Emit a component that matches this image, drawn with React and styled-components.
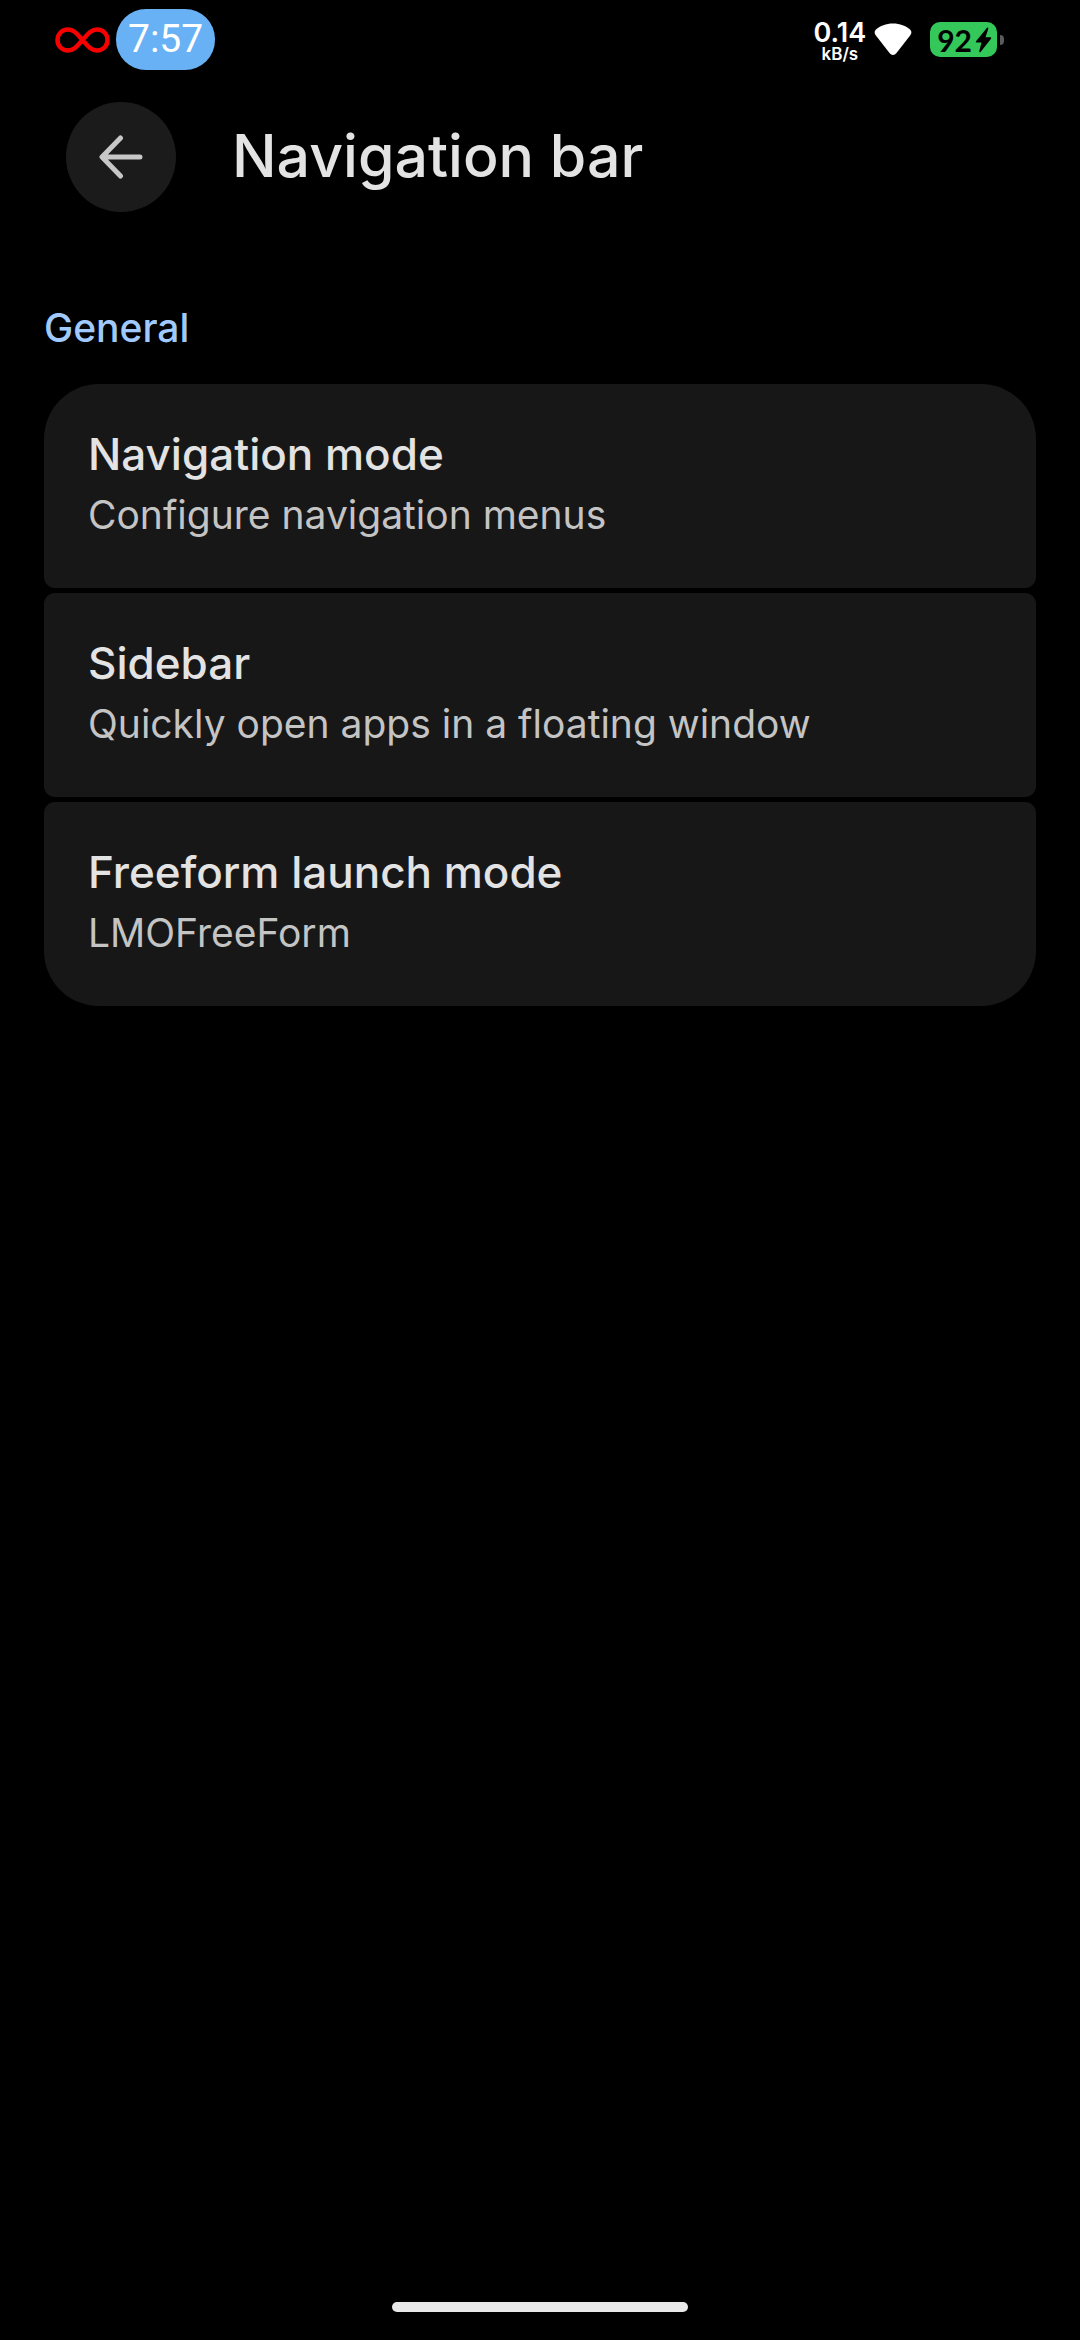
import React from "react";
import styled, { createGlobalStyle } from "styled-components";

const GlobalStyle = createGlobalStyle`
  * {
    box-sizing: border-box;
  }

  body {
    margin: 0;
    background: #000;
    color: #e3e3e3;
    font-family: Inter, Roboto, sans-serif;
  }

  h1, h2, p, ul {
    margin: 0;
    padding: 0;
  }
`;

const preferences = [
  { title: "Navigation mode", summary: "Configure navigation menus" },
  { title: "Sidebar", summary: "Quickly open apps in a floating window" },
  { title: "Freeform launch mode", summary: "LMOFreeForm" },
];

const Screen = styled.div`
  display: flex;
  flex-direction: column;
  min-height: 100vh;
`;

const StatusBar = styled.div`
  display: flex;
  align-items: center;
  justify-content: space-between;
  height: 79px;
  padding: 0 76px 0 54px;
`;

const StatusGroup = styled.div`
  display: flex;
  align-items: center;
  gap: ${(props) => props.$gap}px;
`;

const Clock = styled.time`
  padding: 0 12px;
  border-radius: 30px;
  background: #69b1f5;
  color: #fff;
  font-family: Roboto, sans-serif;
  font-size: 39px;
  line-height: 61px;
`;

const NetworkSpeed = styled.div`
  display: flex;
  flex-direction: column;
  align-items: center;
  padding-top: 4px;
  color: #fff;
  font-weight: 600;
`;

const SpeedValue = styled.span`
  font-size: 27px;
  line-height: 24px;
`;

const SpeedUnit = styled.span`
  font-size: 17px;
  line-height: 18px;
`;

const Battery = styled.div`
  display: flex;
  align-items: center;
  gap: 3px;
`;

const BatteryLevel = styled.div`
  display: flex;
  align-items: center;
  gap: 3px;
  height: 35px;
  padding: 0 5px 0 7px;
  border-radius: 10px;
  background: #34c759;
  color: #000;
  font-family: Lato, sans-serif;
  font-size: 30px;
  font-weight: 700;
`;

const BatteryTip = styled.span`
  width: 4px;
  height: 10px;
  border-radius: 0 5px 5px 0;
  background: #5a5a5a;
`;

const Toolbar = styled.header`
  display: flex;
  align-items: center;
  gap: 56px;
  padding: 23px 66px 0;
`;

const BackButton = styled.button`
  display: flex;
  align-items: center;
  justify-content: center;
  width: 110px;
  height: 110px;
  padding: 0;
  border: 0;
  border-radius: 50%;
  background: #1b1b1b;
  color: #c7c7c7;
  cursor: pointer;
`;

const PageTitle = styled.h1`
  padding-bottom: 2px;
  font-size: 59px;
  font-weight: 500;
  line-height: 76px;
`;

const Content = styled.main`
  flex: 1;
  padding: 92px 44px 0;
`;

const SectionTitle = styled.h2`
  color: #a0cafd;
  font-size: 39px;
  font-weight: 500;
  line-height: 48px;
`;

const PreferenceList = styled.ul`
  display: flex;
  flex-direction: column;
  gap: 5px;
  margin-top: 32px;
  list-style: none;
`;

const Preference = styled.button`
  display: flex;
  flex-direction: column;
  gap: 9px;
  width: 100%;
  padding: 42px 44px 49px;
  border: 0;
  border-radius: 11px;
  background: #171717;
  color: inherit;
  font-family: inherit;
  text-align: left;
  cursor: pointer;

  li:first-child > & {
    border-top-left-radius: 55px;
    border-top-right-radius: 55px;
  }

  li:last-child > & {
    border-bottom-left-radius: 55px;
    border-bottom-right-radius: 55px;
  }
`;

const PreferenceTitle = styled.span`
  font-size: 44px;
  font-weight: 500;
  line-height: 56px;
`;

const PreferenceSummary = styled.span`
  color: #c4c4c4;
  font-size: 39px;
  line-height: 48px;
`;

const GestureBar = styled.footer`
  display: flex;
  justify-content: center;
  padding-bottom: 28px;
`;

const GestureHandle = styled.span`
  width: 296px;
  height: 10px;
  border-radius: 5px;
  background: #e9e9e9;
`;

const InfinityIcon = () => (
  <svg width="57" height="28" viewBox="0 0 57 28" fill="none" aria-hidden="true">
    <path
      d="M28.5 14C23 8 20 3.500 14 3.500C8 3.500 3.500 8 3.500 14S8 24.500 14 24.500C20 24.500 23 20 28.5 14C34 8 37 3.500 43 3.500C49 3.500 53.500 8 53.500 14S49 24.500 43 24.500C37 24.500 34 20 28.5 14Z"
      stroke="#f80000"
      strokeWidth="4.5"
    />
  </svg>
);

const WifiIcon = () => (
  <svg width="38" height="33" viewBox="0 0 38 33" aria-hidden="true">
    <path
      d="M19 0.5C12 0.500 6 3 2 6.500C0.300 8 0.200 10 1.500 12L15.500 30C17.500 32.500 20.500 32.500 22.500 30L36.500 12C37.800 10 37.700 8 36 6.500C32 3 26 0.500 19 0.500Z"
      fill="#fff"
    />
  </svg>
);

const BoltIcon = () => (
  <svg width="17" height="26" viewBox="0 0 17 26" aria-hidden="true">
    <path
      d="M12 0.800L1 14.200Q0.200 15.500 1.700 15.500H6.500L4.200 24.300Q4.200 26 5.600 25L16 11.700Q16.800 10.300 15.200 10.300H10.500L13.300 1.800Q13.300 0 12 0.800Z"
      fill="#000"
    />
  </svg>
);

const BackIcon = () => (
  <svg width="44" height="44" viewBox="0 0 44 44" fill="none" aria-hidden="true">
    <path
      d="M21.5 3L3 22L21.5 41M4 22H41"
      stroke="currentColor"
      strokeWidth="5"
      strokeLinecap="round"
      strokeLinejoin="round"
    />
  </svg>
);

const App = () => (
  <>
    <GlobalStyle />
    <Screen>
      <StatusBar>
        <StatusGroup $gap={5}>
          <InfinityIcon />
          <Clock>7:57</Clock>
        </StatusGroup>
        <StatusGroup $gap={18}>
          <StatusGroup $gap={8}>
            <NetworkSpeed>
              <SpeedValue>0.14</SpeedValue>
              <SpeedUnit>kB/s</SpeedUnit>
            </NetworkSpeed>
            <WifiIcon />
          </StatusGroup>
          <Battery>
            <BatteryLevel>
              92
              <BoltIcon />
            </BatteryLevel>
            <BatteryTip />
          </Battery>
        </StatusGroup>
      </StatusBar>
      <Toolbar>
        <BackButton type="button" aria-label="Navigate up">
          <BackIcon />
        </BackButton>
        <PageTitle>Navigation bar</PageTitle>
      </Toolbar>
      <Content>
        <SectionTitle>General</SectionTitle>
        <PreferenceList>
          {preferences.map(({ title, summary }) => (
            <li key={title}>
              <Preference type="button">
                <PreferenceTitle>{title}</PreferenceTitle>
                <PreferenceSummary>{summary}</PreferenceSummary>
              </Preference>
            </li>
          ))}
        </PreferenceList>
      </Content>
      <GestureBar>
        <GestureHandle />
      </GestureBar>
    </Screen>
  </>
);

export default App;
